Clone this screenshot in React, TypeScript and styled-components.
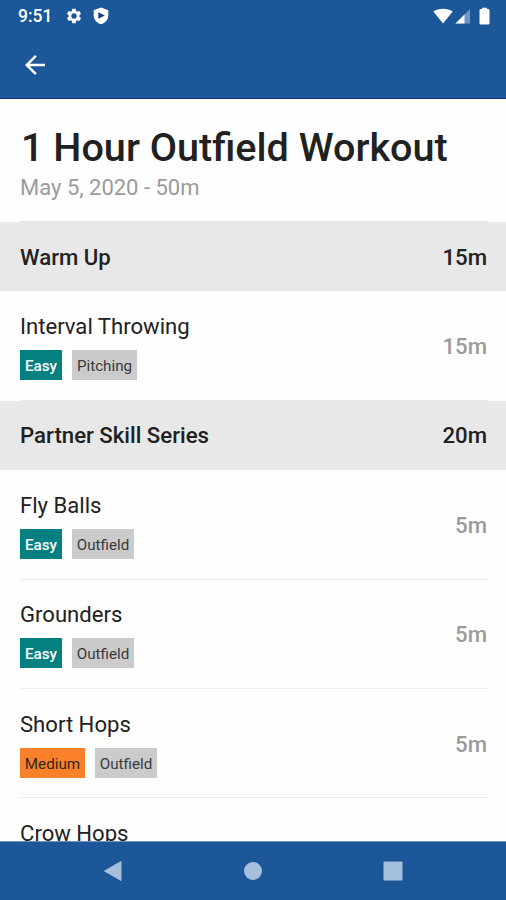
import React from "react";
import styled, { createGlobalStyle } from "styled-components";

const GlobalStyle = createGlobalStyle`
  * { box-sizing: border-box; }
  body { margin: 0; background: #fefefe; font-family: Roboto, "Liberation Sans", sans-serif; }
`;

const Screen = styled.div`
  display: flex;
  flex-direction: column;
  width: 506px;
  height: 900px;
  overflow: hidden;
  background: #fefefe;
  color: #212121;
`;

const Header = styled.header`
  flex: none;
  height: 99px;
  background: #1b5799;
  border-bottom: 1px solid #0b3484;
  color: #fff;
`;

const StatusBar = styled.div`
  display: flex;
  align-items: center;
  justify-content: space-between;
  height: 31px;
  padding: 0 16px 0 18px;
`;

const StatusGroup = styled.div<{ $gap: number }>`
  display: flex;
  align-items: center;
  gap: ${(p) => p.$gap}px;

  svg { display: block; }
`;

const Clock = styled.span`
  width: 34px;
  margin-right: 3px;
  font-size: 17.5px;
  font-weight: 500;
  line-height: 20px;
  white-space: nowrap;
`;

const Toolbar = styled.div`
  display: flex;
  align-items: center;
  height: 67px;
  padding-left: 20px;
`;

const BackButton = styled.button`
  display: flex;
  padding: 0;
  border: 0;
  background: none;
  color: inherit;
`;

const Content = styled.main`
  flex: 1;
  min-height: 0;
  overflow: hidden;
`;

const Intro = styled.div`
  height: 123px;
  margin: 0 18px 0 20px;
  padding-top: 25px;
  border-bottom: 1px solid #e4e4e4;
`;

const Title = styled.h1`
  margin: 0 0 0 1px;
  font-size: 39.6px;
  font-weight: 500;
  line-height: 47px;
  white-space: nowrap;
`;

const Subtitle = styled.p`
  margin: 3px 0 0;
  font-size: 22px;
  line-height: 28px;
  color: #9b9b9b;
`;

const SectionBar = styled.div`
  display: flex;
  align-items: center;
  justify-content: space-between;
  height: 69.4px;
  padding: 0 19px 0 20px;
  background: #e8e8e8;
  font-size: 22.2px;
  font-weight: 500;
`;

const Row = styled.div`
  display: flex;
  align-items: center;
  justify-content: space-between;
  height: 109.4px;
  margin: 0 18px 0 20px;
  padding: 2px 1px 0 0;
  border-bottom: 1px solid #ececec;
`;

const Exercise = styled.div`
  display: flex;
  flex-direction: column;
  gap: 11px;
`;

const ExerciseName = styled.div`
  font-size: 22.1px;
  line-height: 26px;
  white-space: nowrap;
`;

const Tags = styled.div`
  display: flex;
  gap: 10px;
`;

type Tone = "easy" | "medium" | "plain";

const tones: Record<Tone, { bg: string; fg: string; weight: number }> = {
  easy: { bg: "#048080", fg: "#ffffff", weight: 500 },
  medium: { bg: "#fa812a", fg: "#30251b", weight: 400 },
  plain: { bg: "#cbcbcb", fg: "#3a3a3a", weight: 400 },
};

const Tag = styled.span<{ $tone: Tone; $width: number }>`
  width: ${(p) => p.$width}px;
  height: 30px;
  background: ${(p) => tones[p.$tone].bg};
  color: ${(p) => tones[p.$tone].fg};
  font-size: 15.2px;
  font-weight: ${(p) => tones[p.$tone].weight};
  line-height: 32px;
  text-align: center;
  white-space: nowrap;
`;

const Duration = styled.span`
  padding-bottom: 1px;
  font-size: 22.2px;
  font-weight: 500;
  color: #9b9b9b;
`;

const NavBar = styled.nav`
  display: grid;
  grid-template-columns: repeat(3, 140px);
  justify-content: center;
  align-items: center;
  justify-items: center;
  flex: none;
  height: 59px;
  border-top: 1px solid #6d91c0;
  background: #1b5799;

  svg { display: block; }
`;

interface Drill {
  name: string;
  time: string;
  tags: { label: string; tone: Tone; width: number }[];
}

const easy = { label: "Easy", tone: "easy" as Tone, width: 42 };
const medium = { label: "Medium", tone: "medium" as Tone, width: 65 };
const outfield = { label: "Outfield", tone: "plain" as Tone, width: 62 };
const pitching = { label: "Pitching", tone: "plain" as Tone, width: 65 };

const sections: { name: string; time: string; drills: Drill[] }[] = [
  {
    name: "Warm Up",
    time: "15m",
    drills: [{ name: "Interval Throwing", time: "15m", tags: [easy, pitching] }],
  },
  {
    name: "Partner Skill Series",
    time: "20m",
    drills: [
      { name: "Fly Balls", time: "5m", tags: [easy, outfield] },
      { name: "Grounders", time: "5m", tags: [easy, outfield] },
      { name: "Short Hops", time: "5m", tags: [medium, outfield] },
      { name: "Crow Hops", time: "5m", tags: [medium, outfield] },
    ],
  },
];

const GearIcon = () => (
  <svg width="18" height="18" viewBox="0 0 24 24" fill="#fff">
    <path d="M19.14 12.94c.04-.3.06-.61.06-.94s-.02-.64-.07-.94l2.03-1.58a.5.5 0 0 0 .12-.61l-1.92-3.32a.5.5 0 0 0-.59-.22l-2.39.96a7 7 0 0 0-1.62-.94l-.36-2.54a.48.48 0 0 0-.48-.41h-3.84a.48.48 0 0 0-.47.41l-.36 2.54c-.59.24-1.13.57-1.62.94l-2.39-.96a.48.48 0 0 0-.59.22L2.74 8.87a.47.47 0 0 0 .12.61l2.03 1.58a6.5 6.5 0 0 0 0 1.88l-2.03 1.58a.5.5 0 0 0-.12.61l1.92 3.32c.12.22.37.29.59.22l2.39-.96c.5.38 1.03.7 1.62.94l.36 2.54c.05.24.24.41.48.41h3.84c.24 0 .44-.17.47-.41l.36-2.54a7 7 0 0 0 1.62-.94l2.39.96c.22.08.47 0 .59-.22l1.92-3.32a.47.47 0 0 0-.12-.61zM12 15.6a3.6 3.6 0 1 1 0-7.2 3.6 3.6 0 0 1 0 7.2z" />
  </svg>
);

const ShieldIcon = () => (
  <svg width="16" height="18" viewBox="0 0 16 18">
    <path d="M8 .5 15.3 3.2V8.5C15.3 12.8 12.2 16.1 8 17.3 3.8 16.1.7 12.8.7 8.5V3.2Z" fill="#fff" />
    <path d="M5.3 5.2 11.8 8.5 5.3 11.8Z" fill="#123f86" />
  </svg>
);

const WifiIcon = () => (
  <svg width="20" height="16" viewBox="0 0 20 16">
    <path d="M.3 3.5C6-.3 14-.3 19.7 3.5L10 15.5Z" fill="#fff" />
  </svg>
);

const SignalIcon = () => (
  <svg width="16" height="16" viewBox="0 0 16 16">
    <path d="M15 1V15.5H.5Z" fill="#6d97c4" />
    <path d="M9.5 6.5V15.5H.5Z" fill="#fff" />
  </svg>
);

const BatteryIcon = () => (
  <svg width="17" height="18" viewBox="-6 0 17 18">
    <path d="M3 2V.7h5V2h1.3q1.2 0 1.2 1.2v13q0 1.2-1.2 1.2H1.7Q.5 17.4.5 16.2V3.2Q.5 2 1.7 2Z" fill="#fff" />
  </svg>
);

export default function App() {
  return (
    <>
      <GlobalStyle />
      <Screen>
        <Header>
          <StatusBar>
            <StatusGroup $gap={10}>
              <Clock>9:51</Clock>
              <GearIcon />
              <ShieldIcon />
            </StatusGroup>
            <StatusGroup $gap={2}>
              <WifiIcon />
              <SignalIcon />
              <BatteryIcon />
            </StatusGroup>
          </StatusBar>
          <Toolbar>
            <BackButton aria-label="Back">
              <svg width="30" height="30" viewBox="0 0 24 24" fill="currentColor">
                <path d="M20 11H7.83l5.59-5.59L12 4l-8 8 8 8 1.41-1.41L7.83 13H20v-2z" />
              </svg>
            </BackButton>
          </Toolbar>
        </Header>
        <Content>
          <Intro>
            <Title>1 Hour Outfield Workout</Title>
            <Subtitle>May 5, 2020 - 50m</Subtitle>
          </Intro>
          {sections.map((section) => (
            <React.Fragment key={section.name}>
              <SectionBar>
                <span>{section.name}</span>
                <span>{section.time}</span>
              </SectionBar>
              {section.drills.map((drill) => (
                <Row key={drill.name}>
                  <Exercise>
                    <ExerciseName>{drill.name}</ExerciseName>
                    <Tags>
                      {drill.tags.map((tag) => (
                        <Tag key={tag.label} $tone={tag.tone} $width={tag.width}>
                          {tag.label}
                        </Tag>
                      ))}
                    </Tags>
                  </Exercise>
                  <Duration>{drill.time}</Duration>
                </Row>
              ))}
            </React.Fragment>
          ))}
        </Content>
        <NavBar>
          <svg width="20" height="22" viewBox="0 0 20 22">
            <path d="M18 1.5V20.5L1.5 11Z" fill="#a6bfdc" stroke="#a6bfdc" strokeLinejoin="round" />
          </svg>
          <svg width="20" height="20" viewBox="0 0 20 20">
            <circle cx="10" cy="10" r="9" fill="#a6bfdc" />
          </svg>
          <svg width="20" height="20" viewBox="0 0 20 20">
            <rect x=".5" y=".5" width="19" height="19" rx="1" fill="#a6bfdc" />
          </svg>
        </NavBar>
      </Screen>
    </>
  );
}
